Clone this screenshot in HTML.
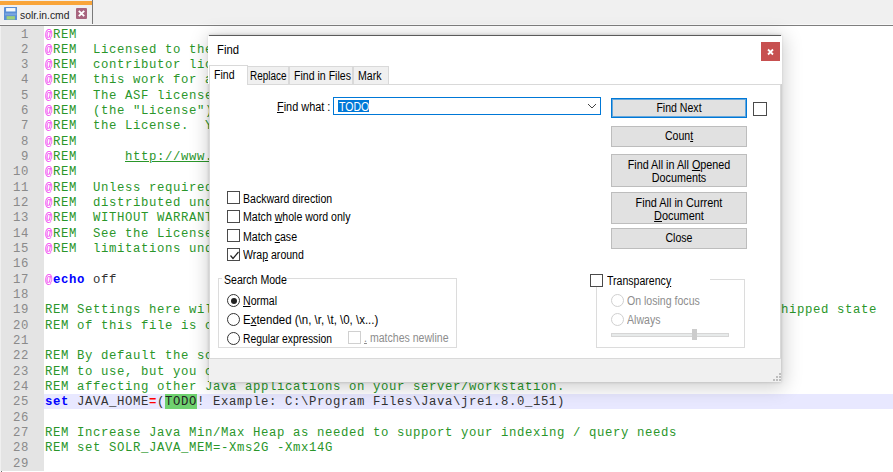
<!DOCTYPE html>
<html><head><meta charset="utf-8">
<style>
*{margin:0;padding:0;box-sizing:border-box}
html,body{width:893px;height:472px;overflow:hidden;background:#fff;font-family:"Liberation Sans",sans-serif}
#tabbar{position:absolute;left:0;top:0;width:893px;height:25px;background:#f0f0f0;border-bottom:1px solid #f8f8f8}
#tab{position:absolute;left:0;top:0;width:93px;height:24px;background:#f0f0f0;border-right:1px solid #7a7a7a}
#tab .orange{position:absolute;left:0;top:1px;width:92px;height:4px;background:#f9a53a}
#tab .name{position:absolute;left:19.5px;top:9.8px;font-size:11.5px;line-height:11.5px;color:#1e1e1e;transform-origin:0 0;transform:scaleX(.9);white-space:nowrap}
#editor{position:absolute;left:0;top:25px;width:893px;height:447px;background:#fff;border-top:1px solid #7e7e7e}
#margin{position:absolute;left:1px;top:26px;width:1px;height:446px;background:#6e6e6e}
.ln{position:absolute;left:0;width:893px;height:15.33px;font-family:"Liberation Mono",monospace;font-size:12.3px;letter-spacing:0.62px;line-height:15.33px;white-space:pre}
.ln.cur{background:#e8e8ff}
.ln .num{position:absolute;left:0px;width:44px;height:15.34px;background:#e4e4e4;color:#8a8a8a;text-align:right;padding-right:15px;padding-top:1.5px;border-left:1px solid #f0f0f0}
.ln .code{position:absolute;left:45px;top:1.5px}
.hlbg{position:absolute;left:165px;top:0;width:32px;height:15.33px;background:#6fd16f}
.at{color:#f23cf2}
.rem{color:#2a962a}
.url{color:#2a962a;text-decoration:underline}
.kw{color:#0000ff;font-weight:bold}
.txt{color:#333}
.op{color:#ff0000;font-weight:bold}
.hl{color:#222}

#dlg{position:absolute;left:209px;top:35px;width:572px;height:347px;background:#f0f0f0;border-top:1px solid #5a5a5a;box-shadow:0 0 3px rgba(0,0,0,.2),1px 3px 18px 2px rgba(0,0,0,.2)}
#dlg .titlebar{position:absolute;left:0;top:0;width:574px;height:30px;background:#fff}
.t{position:absolute;white-space:nowrap;font-size:12px;line-height:11.5px;color:#000;transform-origin:0 0;transform:scaleX(.88);z-index:3;margin-top:.6px}
.tc{position:absolute;white-space:nowrap;font-size:12px;line-height:11.5px;color:#000;text-align:center;transform:scaleX(.88);margin-top:.4px}
.u{text-decoration:underline}
.dis{color:#8d8d8d}
#closebtn{position:absolute;left:553px;top:6px;width:19px;height:19px;background:#c75050}
.tabs{position:absolute;left:0;top:29px;width:574px;height:19px;background:#fff}
.tab{position:absolute;top:1px;height:18px;background:#f0f0f0;border:1px solid #d9d9d9;border-bottom:none}
.tab.sel{top:0;height:20px;background:#fff;border-color:#d9d9d9;z-index:2}
.panel{position:absolute;left:1px;top:48px;width:572px;height:275px;background:#fff;border:1px solid #d9d9d9}
.btn{position:absolute;left:403px;width:136px;background:#e1e1e1;border:1px solid #bdbdbd}
.btn.def{border:1px solid #0078d7;box-shadow:inset 0 0 0 1px rgba(0,120,215,.55)}
.cb{position:absolute;width:13px;height:13px;border:1px solid #4a4a4a;background:#fff}
.rd{position:absolute;width:13px;height:13px;border:1px solid #333;border-radius:50%;background:#fff}
.grp{position:absolute;border:1px solid #dcdcdc}
</style></head><body>
<div id="tabbar">
  <div id="tab"><div class="orange"></div>
  <svg style="position:absolute;left:3.5px;top:6.7px" width="13.5" height="13.5" viewBox="0 0 13 13"><rect x="0" y="0" width="13" height="13" rx="0.8" fill="#5b8fd6"/><rect x="2" y="1" width="9" height="3.3" fill="#f4f8fc"/><rect x="1" y="6" width="11" height="2" fill="#7aa6e0"/><rect x="2.5" y="8.8" width="8" height="3.3" fill="#9ed07a"/></svg>
  <div class="name">solr.in.cmd</div>
  <svg style="position:absolute;left:76px;top:8px" width="11" height="11" viewBox="0 0 11 11"><rect width="11" height="11" rx="1" fill="#a8647e"/><path d="M2.8 2.8L8.2 8.2M8.2 2.8L2.8 8.2" stroke="#fff" stroke-width="1.9"/></svg>
  </div>
</div>
<div id="editor"></div>
<div id="margin"></div>
<div class="ln" style="top:26.00px"><span class="num">1</span><span class="code"><span class="at">@</span><span class="rem">REM</span></span></div>
<div class="ln" style="top:41.33px"><span class="num">2</span><span class="code"><span class="at">@</span><span class="rem">REM  Licensed to the Apache Software Foundation (ASF) under one or more</span></span></div>
<div class="ln" style="top:56.66px"><span class="num">3</span><span class="code"><span class="at">@</span><span class="rem">REM  contributor license agreements.  See the NOTICE file distributed with</span></span></div>
<div class="ln" style="top:71.99px"><span class="num">4</span><span class="code"><span class="at">@</span><span class="rem">REM  this work for additional information regarding copyright ownership.</span></span></div>
<div class="ln" style="top:87.32px"><span class="num">5</span><span class="code"><span class="at">@</span><span class="rem">REM  The ASF licenses this file to You under the Apache License, Version 2.0</span></span></div>
<div class="ln" style="top:102.65px"><span class="num">6</span><span class="code"><span class="at">@</span><span class="rem">REM  (the &quot;License&quot;); you may not use this file except in compliance with</span></span></div>
<div class="ln" style="top:117.98px"><span class="num">7</span><span class="code"><span class="at">@</span><span class="rem">REM  the License.  You may obtain a copy of the License at</span></span></div>
<div class="ln" style="top:133.31px"><span class="num">8</span><span class="code"><span class="at">@</span><span class="rem">REM</span></span></div>
<div class="ln" style="top:148.64px"><span class="num">9</span><span class="code"><span class="at">@</span><span class="rem">REM      </span><span class="url">http://www.apache.org/licenses/LICENSE-2.0</span></span></div>
<div class="ln" style="top:163.97px"><span class="num">10</span><span class="code"><span class="at">@</span><span class="rem">REM</span></span></div>
<div class="ln" style="top:179.30px"><span class="num">11</span><span class="code"><span class="at">@</span><span class="rem">REM  Unless required by applicable law or agreed to in writing, software</span></span></div>
<div class="ln" style="top:194.63px"><span class="num">12</span><span class="code"><span class="at">@</span><span class="rem">REM  distributed under the License is distributed on an &quot;AS IS&quot; BASIS,</span></span></div>
<div class="ln" style="top:209.96px"><span class="num">13</span><span class="code"><span class="at">@</span><span class="rem">REM  WITHOUT WARRANTIES OR CONDITIONS OF ANY KIND, either express or implied.</span></span></div>
<div class="ln" style="top:225.29px"><span class="num">14</span><span class="code"><span class="at">@</span><span class="rem">REM  See the License for the specific language governing permissions and</span></span></div>
<div class="ln" style="top:240.62px"><span class="num">15</span><span class="code"><span class="at">@</span><span class="rem">REM  limitations under the License.</span></span></div>
<div class="ln" style="top:255.95px"><span class="num">16</span><span class="code"></span></div>
<div class="ln" style="top:271.28px"><span class="num">17</span><span class="code"><span class="at">@</span><span class="kw">echo</span><span class="txt"> off</span></span></div>
<div class="ln" style="top:286.61px"><span class="num">18</span><span class="code"></span></div>
<div class="ln" style="top:301.94px"><span class="num">19</span><span class="code"><span class="rem">REM Settings here will override settings in existing env vars or in bin/solr.  The default shipped state</span></span></div>
<div class="ln" style="top:317.27px"><span class="num">20</span><span class="code"><span class="rem">REM of this file is completely commented.</span></span></div>
<div class="ln" style="top:332.60px"><span class="num">21</span><span class="code"></span></div>
<div class="ln" style="top:347.93px"><span class="num">22</span><span class="code"><span class="rem">REM By default the script will use JAVA_HOME to determine which java</span></span></div>
<div class="ln" style="top:363.26px"><span class="num">23</span><span class="code"><span class="rem">REM to use, but you can set a specific path for Solr to use without</span></span></div>
<div class="ln" style="top:378.59px"><span class="num">24</span><span class="code"><span class="rem">REM affecting other Java applications on your server/workstation.</span></span></div>
<div class="ln cur" style="top:393.92px"><span class="num">25</span><div class="hlbg"></div><span class="code"><span class="kw">set</span><span class="txt"> JAVA_HOME</span><span class="op">=</span><span class="txt">(</span><span class="hl">TODO</span><span class="txt">! Example: C:\Program Files\Java\jre1.8.0_151)</span></span></div>
<div class="ln" style="top:409.25px"><span class="num">26</span><span class="code"></span></div>
<div class="ln" style="top:424.58px"><span class="num">27</span><span class="code"><span class="rem">REM Increase Java Min/Max Heap as needed to support your indexing / query needs</span></span></div>
<div class="ln" style="top:439.91px"><span class="num">28</span><span class="code"><span class="rem">REM set SOLR_JAVA_MEM=-Xms2G -Xmx14G</span></span></div>
<div class="ln" style="top:455.24px"><span class="num">29</span><span class="code"></span></div>

<div id="dlg"><div style="position:absolute;left:-1px;top:0;width:574px;height:346px">
 <div class="titlebar">
  <div class="t" style="left:9px;top:7px;font-size:12px;line-height:12px;transform:scaleX(.94)">Find</div>
  <div id="closebtn"><svg width="19" height="19" viewBox="0 0 19 19"><path d="M7 7.5L12 12.5M12 7.5L7 12.5" stroke="#fff" stroke-width="1.8"/></svg></div>
 </div>
 <div class="tabs">
  <div class="tab sel" style="left:1px;width:39px"></div>
  <div class="tab" style="left:39px;width:42px"></div>
  <div class="tab" style="left:81px;width:64px"></div>
  <div class="tab" style="left:145px;width:36px"></div>
  <div class="t" style="left:6px;top:4px">Find</div>
  <div class="t" style="left:42px;top:5px;transform:scaleX(0.827)">Replace</div>
  <div class="t" style="left:86px;top:5px">Find in Files</div>
  <div class="t" style="left:150px;top:5px">Mark</div>
 </div>
 <div class="panel"></div>
 <!-- find what -->
 <div class="t" style="left:69px;top:65px;transform:scaleX(0.909)"><span class="u">F</span>ind what :</div>
 <div style="position:absolute;left:125px;top:61px;width:268px;height:18px;background:#fff;border:1px solid #0078d7"></div>
 <div style="position:absolute;left:130px;top:64px;width:31px;height:12px;background:#0078d7"></div>
 <div class="t" style="left:131px;top:65px;color:#fff">TODO</div>
 <svg style="position:absolute;left:379px;top:67px" width="10" height="6" viewBox="0 0 10 6"><path d="M1 1L5 5L9 1" fill="none" stroke="#444" stroke-width="1"/></svg>
 <!-- buttons -->
 <div class="btn def" style="top:62px;height:20px"></div>
 <div class="cb" style="left:545px;top:66px;width:14px;height:14px"></div>
 <div class="btn" style="top:90px;height:21px"></div>
 <div class="btn" style="top:118px;height:33px"></div>
 <div class="btn" style="top:156px;height:32px"></div>
 <div class="btn" style="top:192px;height:21px"></div>
 <div class="tc" style="left:403px;width:136px;top:67px">Find Next</div>
 <div class="tc" style="left:403px;width:136px;top:95px">Coun<span class="u">t</span></div>
 <div class="tc" style="left:403px;width:136px;top:123px;line-height:12.3px;transform:scaleX(0.899)">Find All in All <span class="u">O</span>pened<br>Documents</div>
 <div class="tc" style="left:403px;width:136px;top:161px;line-height:12.7px;transform:scaleX(.91)">Find All in Current<br><span class="u">D</span>ocument</div>
 <div class="tc" style="left:403px;width:136px;top:197px">Close</div>
 <!-- checkboxes -->
 <div class="cb" style="left:19px;top:155px"></div>
 <div class="cb" style="left:19px;top:174px"></div>
 <div class="cb" style="left:19px;top:193px"></div>
 <div class="cb" style="left:19px;top:212px"><svg style="position:absolute;left:1px;top:1px" width="11" height="11" viewBox="0 0 11 11"><path d="M1.5 5.5L4 8.5L9.5 2" fill="none" stroke="#222" stroke-width="1.2"/></svg></div>
 <div class="t" style="left:35px;top:157px">Backward direction</div>
 <div class="t" style="left:35px;top:175px">Match <span class="u">w</span>hole word only</div>
 <div class="t" style="left:35px;top:195px">Match <span class="u">c</span>ase</div>
 <div class="t" style="left:35px;top:213px">Wra<span class="u">p</span> around</div>
 <!-- search mode -->
 <div class="grp" style="left:10px;top:242px;width:239px;height:70px"></div>
 <div style="position:absolute;left:14px;top:237px;width:64px;height:12px;background:#fff"></div>
 <div class="t" style="left:16px;top:238px">Search Mode</div>
 <div class="rd" style="left:19px;top:258px"><div style="position:absolute;left:2.5px;top:2.5px;width:6px;height:6px;border-radius:50%;background:#222"></div></div>
 <div class="rd" style="left:19px;top:277px"></div>
 <div class="rd" style="left:19px;top:296px"></div>
 <div class="t" style="left:35px;top:259px"><span class="u">N</span>ormal</div>
 <div class="t" style="left:35px;top:278px;transform:scaleX(0.957)">E<span class="u">x</span>tended (\n, \r, \t, \0, \x...)</div>
 <div class="t" style="left:35px;top:297px;transform:scaleX(0.861)">Regular expression</div>
 <div class="cb" style="left:140px;top:295px;border-color:#d0d0d0"></div>
 <div class="t dis" style="left:156px;top:296px"><span class="u">.</span> matches newline</div>
 <!-- transparency -->
 <div class="grp" style="left:388px;top:242.5px;width:149px;height:69px"></div>
 <div style="position:absolute;left:380px;top:236px;width:122px;height:14px;background:#fff"></div>
 <div class="cb" style="left:382px;top:238px"></div>
 <div class="t" style="left:399px;top:239px">Transparenc<span class="u">y</span></div>
 <div class="rd" style="left:403px;top:258px;border-color:#d0d0d0"></div>
 <div class="rd" style="left:403px;top:277px;border-color:#d0d0d0"></div>
 <div class="t dis" style="left:419px;top:259px">On losing focus</div>
 <div class="t dis" style="left:419px;top:278px">Always</div>
 <div style="position:absolute;left:403px;top:297px;width:118px;height:4px;background:#e7eaea;border:1px solid #d6d6d6"></div>
 <div style="position:absolute;left:484px;top:293px;width:5px;height:11px;background:#cccccc"></div>
 <!-- grip -->
 <svg style="position:absolute;left:565px;top:337px" width="9" height="9" viewBox="0 0 9 9" fill="#bdbdbd"><rect x="6" y="0" width="2" height="2"/><rect x="3" y="3" width="2" height="2"/><rect x="6" y="3" width="2" height="2"/><rect x="0" y="6" width="2" height="2"/><rect x="3" y="6" width="2" height="2"/><rect x="6" y="6" width="2" height="2"/></svg>
</div></div>

</body></html>
